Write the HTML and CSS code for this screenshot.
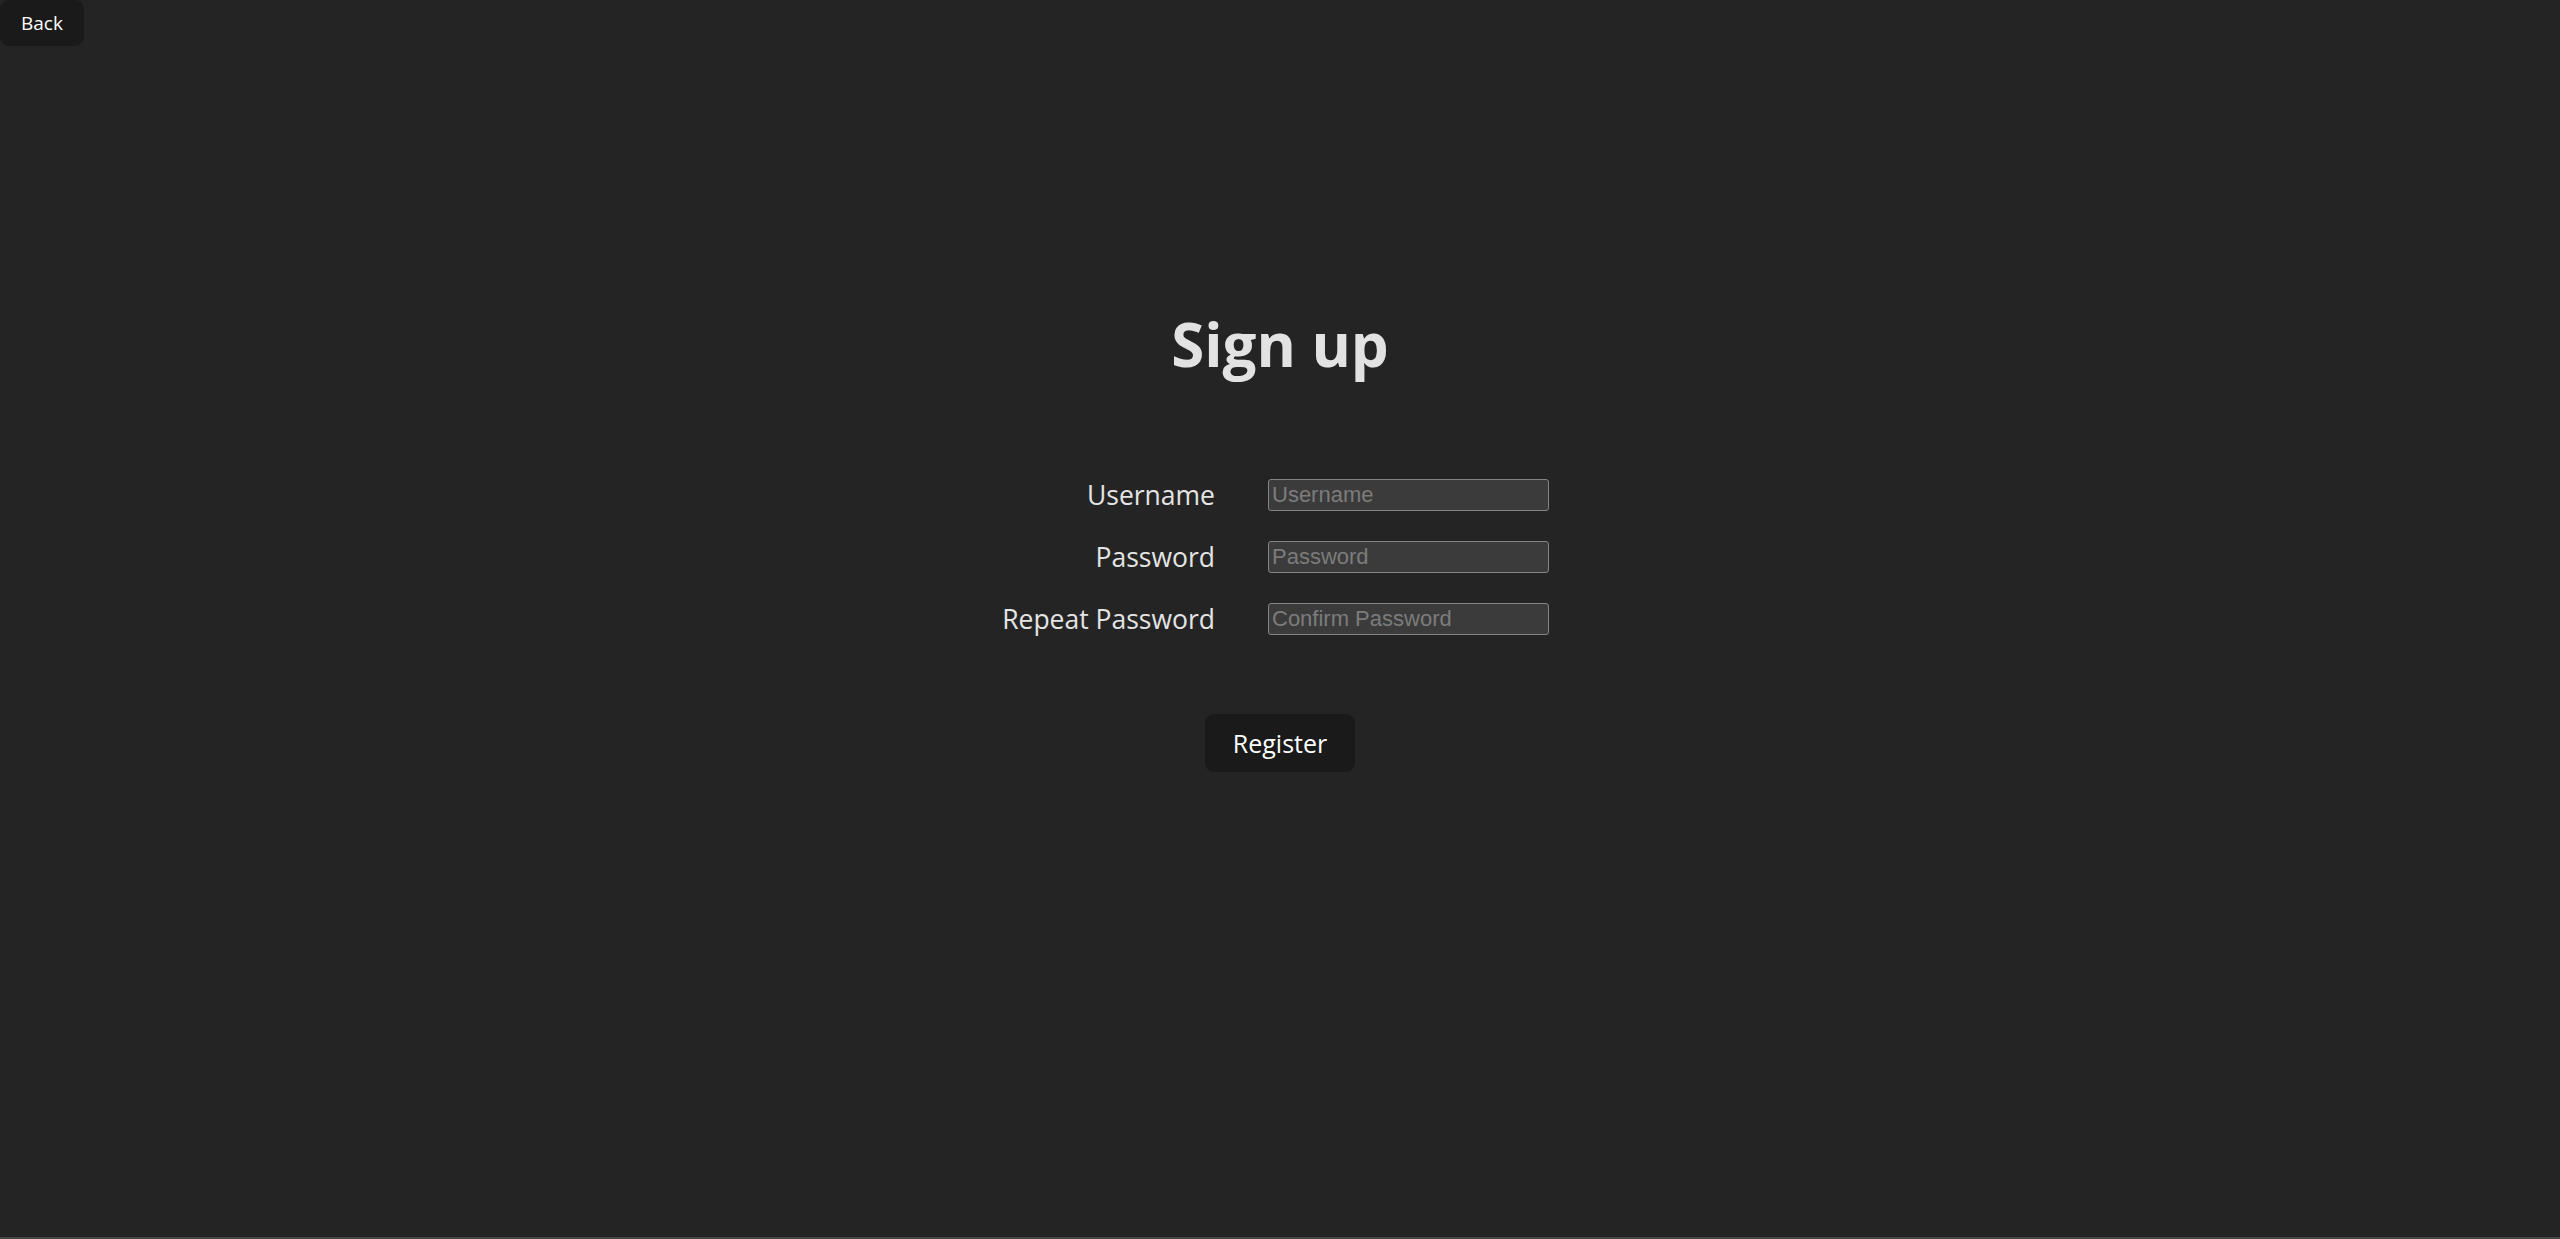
FILE: index.html
```html
<!DOCTYPE html>
<html lang="en">
<head>
<meta charset="utf-8">
<title>Sign up</title>
<link rel="stylesheet" href="styles.css">
</head>
<body>
<div class="page">
  <div class="topbar">
    <button class="btn back" type="button">Back</button>
  </div>
  <main class="content">
    <h1 class="title">Sign up</h1>
    <form class="form">
      <label class="label" for="u">Username</label>
      <input class="field" id="u" type="text" placeholder="Username">
      <label class="label" for="p">Password</label>
      <input class="field" id="p" type="password" placeholder="Password">
      <label class="label" for="c">Repeat Password</label>
      <input class="field" id="c" type="password" placeholder="Confirm Password">
    </form>
    <button class="btn register" type="button">Register</button>
  </main>
</div>
</body>
</html>
```

FILE: styles.css
```css
html, body {
  margin: 0;
  padding: 0;
  background: #242424;
}

body {
  font-family: "Open Sans", "Noto Sans", sans-serif;
  color: rgba(255, 255, 255, 0.87);
}

.page {
  min-height: 100vh;
  box-sizing: border-box;
  border-bottom: 2px solid #464646;
  display: flex;
  flex-direction: column;
}

.topbar {
  display: flex;
}

.btn {
  font-family: "Open Sans", "Noto Sans", sans-serif;
  background: #1a1a1a;
  color: #ffffff;
  border: none;
  border-radius: 9px;
  cursor: pointer;
}

.back {
  height: 46px;
  padding: 0 21px;
  font-size: 19px;
  line-height: 46px;
}

.content {
  display: flex;
  flex-direction: column;
  align-items: center;
}

.title {
  margin: 265px 0 0;
  font-size: 60px;
  line-height: 66px;
  font-weight: 700;
  color: #e2e2e2;
}

.form {
  margin: 102px 0 0;
  align-self: stretch;
  box-sizing: border-box;
  padding-left: 257px;
  display: grid;
  grid-template-columns: minmax(0, 1fr) 281px minmax(0, 1fr);
  column-gap: 53px;
  row-gap: 30px;
  align-items: center;
}

.label {
  grid-column: 1;
  justify-self: end;
  white-space: nowrap;
  font-size: 26.5px;
  line-height: 32px;
  color: #e4e4e4;
}

.field {
  grid-column: 2;
  box-sizing: border-box;
  width: 281px;
  height: 32px;
  margin: 0;
  padding: 0 3px;
  background: #3b3b3b;
  border: 1px solid #858585;
  border-radius: 3px;
  color: #e0e0e0;
  font-family: "Liberation Sans", Arial, sans-serif;
  font-size: 22px;
}

.field::placeholder {
  color: #7c7c7c;
}

.register {
  margin-top: 79px;
  height: 58px;
  padding: 0 28px;
  font-size: 25px;
  line-height: 56px;
}
```
